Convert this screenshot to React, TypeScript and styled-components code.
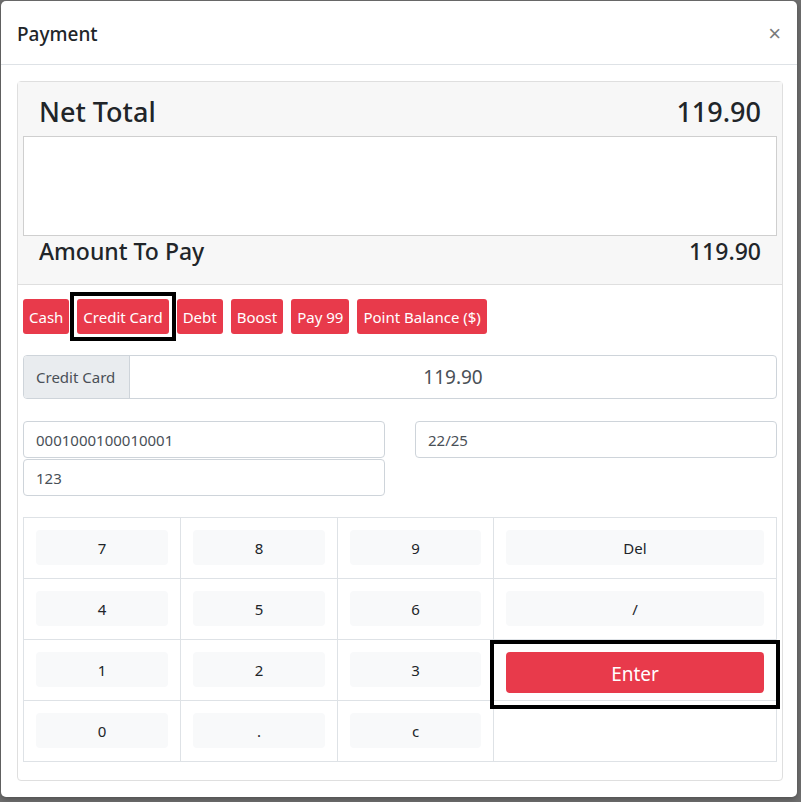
import React from "react";
import styled, { createGlobalStyle } from "styled-components";

const Global = createGlobalStyle`
  html, body { margin: 0; padding: 0; }
  body {
    background: #6f6f6f;
    font-family: "Noto Sans", "Open Sans", sans-serif;
    color: #212529;
  }
  * { box-sizing: border-box; }
`;

const Page = styled.div`
  width: 801px;
  height: 802px;
  padding: 1px 4px 5px 1px;
`;

const Modal = styled.div`
  width: 796px;
  height: 796px;
  background: #fff;
  border-radius: 5px;
  display: flex;
  flex-direction: column;
  box-shadow: 0 2px 6px rgba(0, 0, 0, 0.3);
`;

const Header = styled.div`
  height: 64px;
  border-bottom: 1px solid #dee2e6;
  display: flex;
  align-items: center;
  justify-content: space-between;
  padding: 2px 16px 0 16px;
`;

const Title = styled.h5`
  margin: 0;
  font-size: 19px;
  font-weight: 500;
  color: #212529;
`;

const Close = styled.button`
  border: none;
  background: none;
  padding: 0;
  font-size: 22px;
  line-height: 1;
  color: #7b7b7b;
  font-family: "Liberation Sans", sans-serif;
  cursor: pointer;
`;

const Body = styled.div`
  padding: 16px;
  flex: 1;
  display: flex;
`;

const Card = styled.div`
  flex: 1;
  border: 1px solid #dfdfdf;
  border-radius: 4px;
  display: flex;
  flex-direction: column;
`;

const CardHeader = styled.div`
  background: #f7f7f7;
  border-bottom: 1px solid #dfdfdf;
  padding: 0 5px;
`;

const TotalRow = styled.div<{ $big?: boolean }>`
  display: flex;
  justify-content: space-between;
  align-items: flex-start;
  padding: ${(p) => (p.$big ? "13px 16px 7px" : "1px 16px 19px")};
  font-size: ${(p) => (p.$big ? "27px" : "23px")};
  line-height: ${(p) => (p.$big ? "34px" : "28px")};
  font-weight: 500;
  color: #212529;
`;

const NoteBox = styled.div`
  height: 100px;
  background: #fff;
  border: 1px solid #cfcfcf;
`;

const CardBody = styled.div`
  padding: 14px 5px 17px;
  display: flex;
  flex-direction: column;
`;

const MethodBar = styled.div`
  display: flex;
  gap: 8px;
`;

const Method = styled.button<{ $active?: boolean }>`
  position: relative;
  height: 35px;
  padding: 0 6px;
  border: none;
  border-radius: 3px;
  background: #e83a4b;
  color: #fff;
  font-family: inherit;
  font-size: 15px;
  &::after {
    content: "";
    display: ${(p) => (p.$active ? "block" : "none")};
    position: absolute;
    top: -7px;
    left: -7px;
    right: -7px;
    bottom: -7px;
    border: 4px solid #000;
  }
`;

const AmountGroup = styled.div`
  margin-top: 21px;
  display: flex;
  height: 44px;
  border: 1px solid #ced4da;
  border-radius: 4px;
  overflow: hidden;
`;

const Prepend = styled.div`
  width: 106px;
  background: #e9ecef;
  border-right: 1px solid #ced4da;
  display: flex;
  align-items: center;
  padding-left: 12px;
  font-size: 15px;
  color: #495057;
`;

const AmountValue = styled.div`
  flex: 1;
  display: flex;
  align-items: center;
  justify-content: center;
  font-size: 19px;
  color: #495057;
`;

const CardFields = styled.div`
  margin-top: 22px;
  display: grid;
  grid-template-columns: 362px 362px;
  column-gap: 30px;
  row-gap: 1px;
`;

const Field = styled.div`
  height: 37px;
  border: 1px solid #ced4da;
  border-radius: 4px;
  display: flex;
  align-items: center;
  padding-left: 12px;
  font-size: 15px;
  color: #495057;
`;

const Keypad = styled.div`
  margin-top: 21px;
  display: grid;
  grid-template-columns: 157px 157px 156px 1fr;
  border-top: 1px solid #dee2e6;
  border-left: 1px solid #dee2e6;
`;

const Cell = styled.div`
  height: 61px;
  padding: 12px 12px 0;
  border-right: 1px solid #dee2e6;
  border-bottom: 1px solid #dee2e6;
`;

const Key = styled.button`
  width: 100%;
  height: 35px;
  border: none;
  border-radius: 4px;
  background: #f8f9fa;
  color: #212529;
  font-family: inherit;
  font-size: 15px;
`;

const EnterKey = styled.button`
  position: relative;
  width: 100%;
  height: 41px;
  border: none;
  border-radius: 4px;
  background: #e83a4b;
  color: #fff;
  font-family: inherit;
  font-size: 19px;
  padding-top: 3px;
  &::after {
    content: "";
    position: absolute;
    top: -12px;
    left: -16px;
    right: -16px;
    bottom: -16px;
    border: 4px solid #000;
  }
`;

const methods = ["Cash", "Credit Card", "Debt", "Boost", "Pay 99", "Point Balance ($)"];
const rows = [
  ["7", "8", "9", "Del"],
  ["4", "5", "6", "/"],
  ["1", "2", "3", "Enter"],
  ["0", ".", "c", ""],
];

export default function App() {
  return (
    <>
      <Global />
      <Page>
        <Modal>
          <Header>
            <Title>Payment</Title>
            <Close>×</Close>
          </Header>
          <Body>
            <Card>
              <CardHeader>
                <TotalRow $big>
                  <span>Net Total</span>
                  <span>119.90</span>
                </TotalRow>
                <NoteBox />
                <TotalRow>
                  <span>Amount To Pay</span>
                  <span>119.90</span>
                </TotalRow>
              </CardHeader>
              <CardBody>
                <MethodBar>
                  {methods.map((m) => (
                    <Method key={m} $active={m === "Credit Card"}>
                      {m}
                    </Method>
                  ))}
                </MethodBar>
                <AmountGroup>
                  <Prepend>Credit Card</Prepend>
                  <AmountValue>119.90</AmountValue>
                </AmountGroup>
                <CardFields>
                  <Field>0001000100010001</Field>
                  <Field>22/25</Field>
                  <Field>123</Field>
                </CardFields>
                <Keypad>
                  {rows.flat().map((k, i) => (
                    <Cell key={i}>
                      {k === "Enter" ? (
                        <EnterKey>Enter</EnterKey>
                      ) : k ? (
                        <Key>{k}</Key>
                      ) : null}
                    </Cell>
                  ))}
                </Keypad>
              </CardBody>
            </Card>
          </Body>
        </Modal>
      </Page>
    </>
  );
}
